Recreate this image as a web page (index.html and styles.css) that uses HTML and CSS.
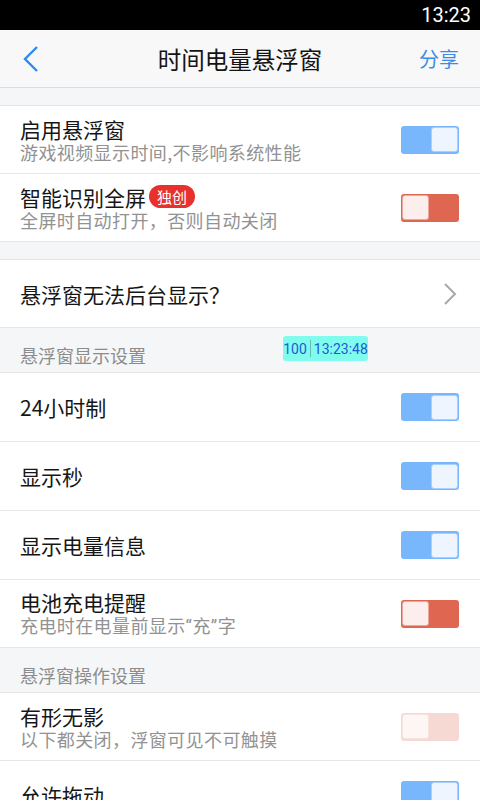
FILE: index.html
```html
<!DOCTYPE html>
<html lang="zh-CN">
<head>
    <meta charset="UTF-8">
    <meta name="viewport" content="width=device-width, initial-scale=1.0">
    <title>时间电量悬浮窗</title>
    <link rel="stylesheet" href="styles.css">
</head>
<body>
    <div class="statusbar"><span class="clock">13:23</span></div>

    <div class="topbar">
        <svg class="back" width="18" height="28" viewBox="0 0 18 28">
            <path d="M15 2 L3 14 L15 26" fill="none" stroke="#2f8af0" stroke-width="2.4"/>
        </svg>
        <div class="title">时间电量悬浮窗</div>
        <div class="share">分享</div>
    </div>

    <div class="spacer"></div>

    <div class="group">
        <div class="row">
            <div class="text">
                <div class="label">启用悬浮窗</div>
                <div class="sub">游戏视频显示时间,不影响系统性能</div>
            </div>
            <div class="switch on"><span class="thumb"></span></div>
        </div>
        <div class="row">
            <div class="text">
                <div class="label">智能识别全屏<span class="badge">独创</span></div>
                <div class="sub">全屏时自动打开，否则自动关闭</div>
            </div>
            <div class="switch off"><span class="thumb"></span></div>
        </div>
    </div>

    <div class="spacer"></div>

    <div class="group">
        <div class="row">
            <div class="text">
                <div class="label">悬浮窗无法后台显示<span class="fw">？</span></div>
            </div>
            <svg class="arrow" width="14" height="22" viewBox="0 0 14 22">
                <path d="M2 1 L12 11 L2 21" fill="none" stroke="#a8a8a8" stroke-width="2"/>
            </svg>
        </div>
    </div>

    <div class="section">悬浮窗显示设置</div>

    <div class="group">
        <div class="row tall">
            <div class="text"><div class="label">24小时制</div></div>
            <div class="switch on"><span class="thumb"></span></div>
        </div>
        <div class="row tall">
            <div class="text"><div class="label">显示秒</div></div>
            <div class="switch on"><span class="thumb"></span></div>
        </div>
        <div class="row tall">
            <div class="text"><div class="label">显示电量信息</div></div>
            <div class="switch on"><span class="thumb"></span></div>
        </div>
        <div class="row">
            <div class="text">
                <div class="label">电池充电提醒</div>
                <div class="sub">充电时在电量前显示<span class="q">“</span>充<span class="q">”</span>字</div>
            </div>
            <div class="switch off"><span class="thumb"></span></div>
        </div>
    </div>

    <div class="section">悬浮窗操作设置</div>

    <div class="group">
        <div class="row">
            <div class="text">
                <div class="label">有形无影</div>
                <div class="sub">以下都关闭，浮窗可见不可触摸</div>
            </div>
            <div class="switch off faded"><span class="thumb"></span></div>
        </div>
        <div class="row">
            <div class="text"><div class="label">允许拖动</div></div>
            <div class="switch on"><span class="thumb"></span></div>
        </div>
    </div>

    <!-- the floating clock window drawn on top of the page -->
    <div class="floater"><span>100</span><i></i><span>13:23:48</span></div>
</body>
</html>
```

FILE: styles.css
```css
body {
    margin: 0;
    width: 480px;
    height: 800px;
    overflow: hidden;
    background: #f5f6f8;
    font-family: "Noto Sans CJK SC", "Noto Sans", sans-serif;
    position: relative;
}
.statusbar {
    height: 30px;
    background: #000;
    display: flex;
    justify-content: flex-end;
    align-items: center;
}
.clock {
    color: #fff;
    font-family: Roboto, sans-serif;
    font-size: 20px;
    padding-right: 9px;
}
.topbar {
    height: 57px;
    background: #f8f8f8;
    border-bottom: 1px solid #dcdcdc;
    display: flex;
    align-items: center;
    position: relative;
}
.back {
    margin-left: 22px;
}
.title {
    position: absolute;
    left: 0;
    right: 0;
    text-align: center;
    font-size: 23.5px;
    color: #141414;
    pointer-events: none;
}
.share {
    margin-left: auto;
    margin-right: 21px;
    font-size: 20px;
    color: #3a8de6;
}
.spacer {
    height: 17px;
    border-bottom: 1px solid #e4e4e4;
}
.group {
    background: #fff;
}
.row {
    height: 67px;
    border-bottom: 1px solid #e6e6e6;
    display: flex;
    align-items: center;
    padding: 0 21px 0 20px;
}
.row.tall {
    height: 68px;
}
.text {
    flex: 1;
}
.label {
    font-size: 21px;
    color: #161616;
    line-height: 24px;
    display: flex;
    align-items: center;
}
.sub {
    font-size: 18px;
    color: #929292;
    line-height: 22px;
    letter-spacing: 0.4px;
}
.q {
    font-family: Roboto, sans-serif;
}
.fw {
    font-feature-settings: "fwid";
}
.badge {
    background: #e8312c;
    color: #fff;
    font-size: 15px;
    line-height: 23px;
    padding: 0 8px;
    border-radius: 12px;
    margin-left: 3px;
}
.switch {
    width: 58px;
    height: 28px;
    border-radius: 3px;
    display: flex;
    align-items: center;
    box-sizing: border-box;
    padding: 1px;
}
.thumb {
    width: 27px;
    height: 25px;
    border-radius: 3px;
    display: block;
}
.switch.on {
    background: #78b7fc;
    justify-content: flex-end;
}
.switch.on .thumb {
    background: #eef5fe;
    border: 1px solid #a7d0ff;
    box-sizing: border-box;
}
.switch.off {
    background: #df6752;
}
.switch.off .thumb {
    background: #fbeeec;
    border: 1px solid #eba79b;
    box-sizing: border-box;
}
.switch.faded {
    background: #f7d9d4;
}
.switch.faded .thumb {
    background: #fdf6f5;
    border-color: #f8e2de;
}
.arrow {
    margin-right: 2px;
}
.section {
    height: 45px;
    border-bottom: 1px solid #e4e4e4;
    box-sizing: border-box;
    padding: 14px 0 0 20px;
    font-size: 18px;
    color: #8c8c8c;
    line-height: 26px;
}
.floater {
    position: absolute;
    left: 283px;
    top: 336px;
    width: 85px;
    height: 25px;
    background: #80fcef;
    border-radius: 3px;
    display: flex;
    align-items: center;
    justify-content: center;
    font-family: Roboto, sans-serif;
    font-size: 14px;
    color: #2457d6;
}
.floater i {
    width: 1px;
    height: 17px;
    background: #6fb8b8;
    margin: 0 3px;
}
```
